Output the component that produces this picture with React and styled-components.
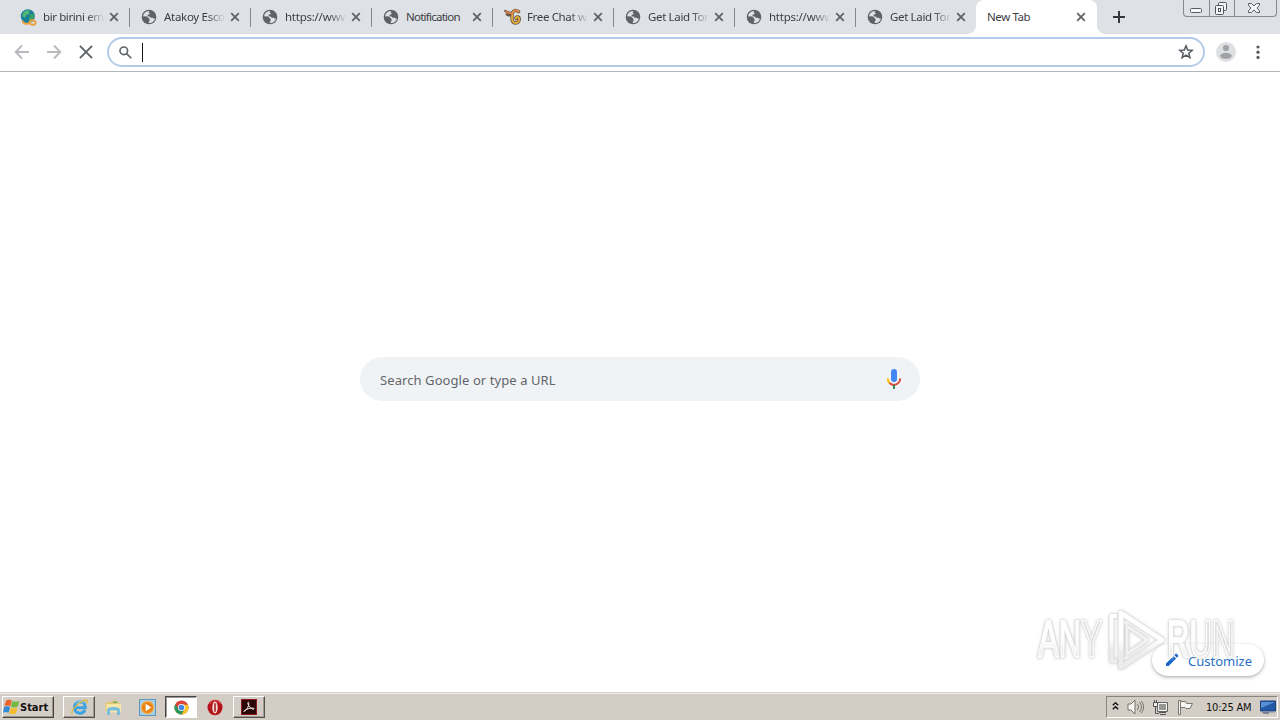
import React from 'react';
import styled, { createGlobalStyle } from 'styled-components';

const GlobalStyle = createGlobalStyle`
    * {
        box-sizing: border-box;
    }
    body {
        margin: 0;
        overflow: hidden;
        background: #fff;
        font-family: "Noto Sans", "Open Sans", sans-serif;
    }
    svg {
        display: block;
        flex-shrink: 0;
    }
`;

const tabs = [
    { title: 'bir birini emen', icon: 'search', spacing: '-0.4px' },
    { title: 'Atakoy Escort', icon: 'globe', spacing: '-0.3px' },
    { title: 'https://www.', icon: 'globe', spacing: '-0.25px' },
    { title: 'Notification', icon: 'globe', spacing: '-0.75px' },
    { title: 'Free Chat with', icon: 'chat', spacing: '-0.35px' },
    { title: 'Get Laid Tonight', icon: 'globe', spacing: '-0.35px' },
    { title: 'https://www.', icon: 'globe', spacing: '-0.25px' },
    { title: 'Get Laid Tonight', icon: 'globe', spacing: '-0.35px' },
];

const GlobeIcon = () => (
    <svg width="16" height="16" viewBox="0 0 16 16">
        <circle cx="8" cy="8" r="7.3" fill="#5f6368" />
        <path d="M8.3 2.1c-1 .8-.6 1.7.3 1.9l-.3 1.4H6.6v1.8l1.9.2 1.2 1.3h2l.7.9h1.6c-.5 2.5-2.7 4.5-5.5 4.5l-.7-.2v-1.3l1-1-.5-1.5H6.9L5.4 8.5 2.2 7.3C2.5 4.3 5 2.1 8.3 2.1Z" fill="#dee1e6" />
        <path d="m3.2 7.2 3 .2 2.2 2.4-1.4 2-1.4-1.4-2.6-.7Z" fill="#5f6368" />
    </svg>
);

const SearchGlobeIcon = () => (
    <svg width="17" height="17" viewBox="0 0 17 17">
        <circle cx="7.8" cy="7.3" r="7" fill="#197f98" />
        <path d="M3.6 2.8 7.5 1l2.3 1.6-.9 2.6-2.7.9-.8 2.7L2 7.3Z" fill="#4fb678" />
        <path d="m10 5.5 3.8-.5.5 3.4-3 3.4-2.6-1.6Z" fill="#38a166" />
        <path d="M2.2 12c2 3.4 4.8 3.6 7.3 1.8m0 0c.8-3.6 5.8-3 6 .1.2 2.5-5.3 2.5-6-.1Z" fill="none" stroke="#eba342" strokeWidth="2" />
    </svg>
);

const ChatIcon = () => (
    <svg width="18" height="18" viewBox="0 0 18 18" fill="none" strokeLinecap="round">
        <path d="M1.5 3c1.5 2.6 4 1.4 6.8 2.5M3 6.5c1.6 1.2 3.3.9 4.8.1" stroke="#6c5645" strokeWidth="2.6" />
        <path d="M14.6 3.6C9.8.2 7.5 5 8.2 8.5c-.6 3.3.3 6.5 3.2 6.5 4 0 5-5.3 2.6-6-1.8-.5-2.5 1.2-1.6 1.8" stroke="#665743" strokeWidth="3.4" />
        <path d="M14.6 3.6C9.8.2 7.5 5 8.2 8.5c-.6 3.3.3 6.5 3.2 6.5 4 0 5-5.3 2.6-6-1.8-.5-2.5 1.2-1.6 1.8" stroke="#e9ad38" strokeWidth="1.8" />
        <path d="M1.7 3.3c1.8 2.4 4 1.2 6.6 2.2m1-2c1.3-1.3 3-1.3 4.8 0" stroke="#e4864d" strokeWidth="1.5" />
    </svg>
);

const favicons = { globe: GlobeIcon, search: SearchGlobeIcon, chat: ChatIcon };

const CloseIcon = ({ size = 10, width = 1.8 }) => (
    <svg width={size} height={size} viewBox="0 0 10 10" fill="none" stroke="#5f6368" strokeWidth={width}>
        <path d="m1.2 1.2 7.6 7.6m0-7.6L1.2 8.8" />
    </svg>
);

const WindowButtons = () => (
    <Controls>
        <ControlButton $width={25}>
            <svg width="13" height="17" viewBox="0 0 13 17">
                <rect x=".5" y="8.5" width="11" height="4" rx="1" fill="#f7f8fa" stroke="#585d65" />
            </svg>
        </ControlButton>
        <ControlButton $width={25}>
            <svg width="14" height="17" viewBox="0 0 14 17" fill="#f3f4f6" stroke="#50555d">
                <rect x="4.5" y="2.5" width="8" height="8" rx="1" />
                <rect x="1.5" y="5.5" width="8" height="9" rx="1" />
                <rect x="4.5" y="8.5" width="2" height="3" />
            </svg>
        </ControlButton>
        <ControlButton $width={42}>
            <svg width="13" height="17" viewBox="0 0 13 17" fill="#f7f8fa" stroke="#585d65">
                <path d="M.5 3.5h3L6 6l2.5-2.5h3v1.8L9 8l2.5 2.8v1.7h-3L6 9.9l-2.5 2.6h-3v-1.7L3 8 .5 5.3Z" />
            </svg>
        </ControlButton>
    </Controls>
);

const TabStrip = () => (
    <Strip>
        {tabs.map(({ title, icon, spacing }, i) => {
            const Icon = favicons[icon];
            return (
                <Tab key={i} $divider={i < tabs.length - 1}>
                    <Favicon><Icon /></Favicon>
                    <TabTitle $spacing={spacing} $fade={title !== 'Notification'}>{title}</TabTitle>
                    <CloseIcon />
                </Tab>
            );
        })}
        <ActiveTab>
            <TabTitle $spacing="-0.4px" $wide>New Tab</TabTitle>
            <CloseIcon />
        </ActiveTab>
        <NewTab>
            <svg width="12" height="12" viewBox="0 0 12 12" stroke="#34373d" strokeWidth="2">
                <path d="M6 0v12M0 6h12" />
            </svg>
        </NewTab>
        <WindowButtons />
    </Strip>
);

const Toolbar = () => (
    <Bar>
        <NavButton>
            <svg width="16" height="16" viewBox="0 0 16 16" fill="none" stroke="#b8babd" strokeWidth="1.9">
                <path d="M15 8H2m6-6.5L1.7 8 8 14.5" />
            </svg>
        </NavButton>
        <NavButton>
            <svg width="16" height="16" viewBox="0 0 16 16" fill="none" stroke="#b8babd" strokeWidth="1.9">
                <path d="M1 8h13M8 1.5 14.3 8 8 14.5" />
            </svg>
        </NavButton>
        <NavButton><CloseIcon size={16} width={1.2} /></NavButton>
        <Omnibox>
            <svg width="13" height="13" viewBox="0 0 13 13" fill="none" stroke="#5f6368" strokeWidth="1.6">
                <circle cx="4.8" cy="4.8" r="3.8" />
                <path d="m7.6 7.6 4.7 4.7" />
            </svg>
            <Caret />
            <svg width="16" height="16" viewBox="0 0 16 16" fill="none" stroke="#55595f" strokeWidth="1.5">
                <path d="m8 1.8 1.7 4.2 4.6.3-3.5 2.9 1.1 4.4L8 11.2l-3.9 2.4 1.1-4.4-3.5-2.9L6.3 6Z" />
            </svg>
        </Omnibox>
        <Avatar>
            <svg width="20" height="20" viewBox="0 0 20 20">
                <circle cx="10" cy="10" r="10" fill="#dfe0e2" />
                <circle cx="10" cy="6" r="3.1" fill="#a0a2a5" />
                <ellipse cx="10" cy="13.8" rx="5.8" ry="3" fill="#a0a2a5" />
            </svg>
        </Avatar>
        <svg width="4" height="16" viewBox="0 0 4 16" fill="#55595f">
            <circle cx="2" cy="3" r="1.6" />
            <circle cx="2" cy="8.2" r="1.6" />
            <circle cx="2" cy="13.4" r="1.6" />
        </svg>
    </Bar>
);

const MicIcon = () => (
    <svg width="16" height="22" viewBox="0 0 16 22" fill="none">
        <rect x="5" y="1" width="6" height="13" rx="3" fill="#4285f4" />
        <path d="M1.8 10.5c0 2.1.8 3.7 2 4.7" stroke="#fbbc04" strokeWidth="2" />
        <path d="M3.5 15c2.8 2.5 6.3 2.5 9-.1 1.1-1.1 1.7-2.5 1.7-4.4" stroke="#dc4a40" strokeWidth="2" />
        <path d="M8 17v4" stroke="#348a53" strokeWidth="2" />
    </svg>
);

const Watermark = () => (
    <Mark>
        <MarkText>ANY</MarkText>
        <svg width="62" height="64" viewBox="0 0 62 64" fill="none" strokeLinejoin="round">
            <defs>
                <linearGradient id="mark" x1="0" y1="0" x2="0" y2="1">
                    <stop offset=".5" stopColor="#fff" />
                    <stop offset=".75" stopColor="#e6e6e6" />
                </linearGradient>
            </defs>
            <path d="M13 8H7.500v45H13" stroke="url(#mark)" strokeWidth="4" />
            <path d="M17 5v54l41-27Z" stroke="url(#mark)" strokeWidth="5" />
            <path d="M23 18v28l20-14Z" stroke="#eee" strokeWidth="3" />
        </svg>
        <MarkText>RUN</MarkText>
    </Mark>
);

const NewTabPage = () => (
    <Page>
        <SearchBox>
            <span>Search Google or type a URL</span>
            <MicIcon />
        </SearchBox>
        <Customize>
            <svg width="14" height="14" viewBox="0 0 14 14" fill="#1967c9">
                <path d="m1 10.4 7.5-7.5 2.6 2.6L3.600 13H1ZM9.300 2.100 10.500.9c.4-.4.9-.4 1.300 0l1.300 1.300c.4.4.4.9 0 1.300l-1.200 1.200Z" />
            </svg>
            <span>Customize</span>
        </Customize>
        <Watermark />
    </Page>
);

const WindowsIcon = () => (
    <svg width="17" height="16" viewBox="0 0 17 16">
        <path d="M3 1.500c2-1.200 3.900-1 5.800.1L7.400 7.300C5.500 6.200 3.500 6 1.500 7.200Z" fill="#e7652d" />
        <path d="M9.400 2c2.200 1 4.700.9 7.100-.3l-1.700 5.900c-2.200 1.100-4.700 1.100-6.900.2Z" fill="#73b943" />
        <path d="M1.200 8c2-1.200 4-1 5.900.1l-1.500 5.700C3.700 12.700 1.700 12.600 0 13.800Z" fill="#328bd2" />
        <path d="M7.700 8.700c2.300.9 4.600.9 6.900-.3L13 14.200c-2.200 1.200-4.600 1.100-6.800.2Z" fill="#f3bd2e" />
    </svg>
);

const ExplorerIcon = () => (
    <svg width="19" height="18" viewBox="0 0 19 18" fill="none">
        <path d="M15 12c-2.500 5-10.300 3.800-10.500-2.300C4.700 2.800 14 2 15.200 8.200v1.500H6" stroke="#3ca2e0" strokeWidth="3" />
        <path d="M6.300 5.700c2-2.600 5.100-2.700 7-.2" stroke="#a2e1fb" />
        <path d="M2.400 16c-3-2 4.500-10.600 11.500-13.700 4-1.600 4 .8 2.200 3.600" stroke="#d9b84b" strokeWidth="1.300" />
    </svg>
);

const FolderIcon = () => (
    <svg width="18" height="17" viewBox="0 0 18 17">
        <path d="M1.500 3h6l1-1.500h5V4H16v9H1.500Z" fill="#e3c873" />
        <path d="M2.500 5H17v8.500H2.500Z" fill="#f5e7a6" />
        <path d="M9 2.500h4V4H9Z" fill="#6daf6f" />
        <path d="M3 16v-4.500c0-2.500 2-3.500 6.500-3.500s6.500 1 6.500 3.500V16h-3v-4.500H6V16Z" fill="#78bde0" />
    </svg>
);

const PlayerIcon = () => (
    <svg width="17" height="17" viewBox="0 0 17 17">
        <rect x=".5" y=".5" width="16" height="16" fill="#a7cce5" stroke="#5f98bd" />
        <circle cx="8.500" cy="8.500" r="6.300" fill="#ed8617" stroke="#f7bd64" />
        <path d="m6.700 4.800 5.500 3.700-5.500 3.700Z" fill="#fff" />
    </svg>
);

const ChromeIcon = () => (
    <svg width="15" height="15" viewBox="0 0 16 16">
        <circle cx="8" cy="8" r="7.500" fill="#dc4437" />
        <path d="M1.400 4.400A7.500 7.500 0 0 0 8 15.500L11 10H5Z" fill="#26995b" />
        <path d="M8 15.500A7.500 7.500 0 0 0 14.800 5H8l3.200 5Z" fill="#f5c52c" />
        <circle cx="8" cy="8" r="3.700" fill="#fff" />
        <circle cx="8" cy="8" r="2.900" fill="#4285e8" />
    </svg>
);

const OperaIcon = () => (
    <svg width="16" height="17" viewBox="0 0 16 17">
        <ellipse cx="8" cy="8.500" rx="7.500" ry="7.800" fill="#b3141a" />
        <path d="M2.500 5c2-4 8-4.500 11-.5" stroke="#d9484a" strokeWidth="1.200" fill="none" />
        <ellipse cx="8" cy="8.500" rx="2.700" ry="6" fill="#f2dcda" />
        <rect x="7" y="4" width="2" height="9" rx="1" fill="#b5474a" />
    </svg>
);

const AcrobatIcon = () => (
    <svg width="16" height="16" viewBox="0 0 16 16">
        <path d="M0 0h16v16H0Z" fill="#8b1a1c" />
        <path d="M1 1h14v14H1Z" fill="#2c0708" />
        <path d="M3 12.500c3-1.600 5-5.300 4.800-8.300-.1-1.800-1.500-.8-.8.8 1 2.600 3 4.700 5.500 5.300 1.300 0 .8-1.200-.6-1.200-2.800-.2-5.600.8-8 2.200-1.100.8-1.200 1.400-.9 1.200Z" fill="none" stroke="#eee" />
    </svg>
);

const launchers = [
    { icon: ExplorerIcon, frame: 'raised' },
    { icon: FolderIcon },
    { icon: PlayerIcon },
    { icon: ChromeIcon, frame: 'pressed' },
    { icon: OperaIcon },
    { icon: AcrobatIcon, frame: 'raised' },
];

const SystemTray = () => (
    <Tray>
        <svg width="7" height="10" viewBox="0 0 7 10" fill="none" stroke="#111" strokeWidth="1.400">
            <path d="m.8 3.200 2.700-2.400 2.700 2.400M.8 7.200l2.700-2.400 2.700 2.400" />
        </svg>
        <svg width="17" height="16" viewBox="0 0 17 16" fill="#f7f6f3" stroke="#74726e">
            <path d="M1 5h3l4-4v14l-4-4H1Z" />
            <path d="M10.300 5c1.600 2 1.600 4 0 6m2-8c2.800 3 2.800 7 0 10m2-11c3 4 3 8 0 12" fill="none" />
        </svg>
        <svg width="17" height="17" viewBox="0 0 17 17">
            <path d="M5.500 3.500h10v9h-10Z" fill="#969693" stroke="#666" />
            <path d="M6.500 4.500h8v7h-8Z" fill="none" stroke="#f5f5f2" />
            <path d="M3.500 8v6.500H7m0-1h7m-6 2h6" fill="none" stroke="#555" />
            <path d="M1.500 3.500h4v4h-4ZM2.500 1v2m2-2v2" fill="#eee" stroke="#555" />
        </svg>
        <svg width="17" height="17" viewBox="0 0 17 17" fill="#f7f6f3" stroke="#777570">
            <path d="M1.500 1.500h2v14h-2Z" />
            <path d="M3.500 2.500h5l1 2h6l-2.500 5H9l-1-1H3.500Z" />
        </svg>
        <Clock>10:25 AM</Clock>
        <svg width="16" height="14" viewBox="0 0 16 14">
            <path d="M.5 1h15v10H.5Z" fill="#2459a6" stroke="#193f7d" />
            <path d="M1 2h14L1 8Z" fill="#5990d2" />
            <path d="M1 12h14" stroke="#8596a6" />
            <path d="M3 13h6" stroke="#344962" />
        </svg>
    </Tray>
);

const Taskbar = () => (
    <Task>
        <StartButton>
            <WindowsIcon />
            <span>Start</span>
        </StartButton>
        <Launchers>
            {launchers.map(({ icon: Icon, frame }, i) => (
                <Launcher key={i} $frame={frame}><Icon /></Launcher>
            ))}
        </Launchers>
        <SystemTray />
    </Task>
);

const App = () => (
    <Desktop>
        <GlobalStyle />
        <TabStrip />
        <Toolbar />
        <NewTabPage />
        <Taskbar />
    </Desktop>
);

const Desktop = styled.div`
    width: 1280px;
    height: 720px;
    display: flex;
    flex-direction: column;
    overflow: hidden;
`;

const Strip = styled.div`
    height: 34px;
    flex-shrink: 0;
    display: flex;
    padding-left: 8px;
    background: #dee1e6;
`;

const Tab = styled.div`
    width: 121px;
    height: 34px;
    display: flex;
    align-items: center;
    padding-left: 12px;
    position: relative;
    &::after {
        content: '';
        display: ${({ $divider }) => ($divider ? 'block' : 'none')};
        position: absolute;
        right: -1px;
        top: 8px;
        width: 1px;
        height: 19px;
        background: #84888f;
    }
`;

const Favicon = styled.div`
    width: 23px;
    flex-shrink: 0;
`;

const TabTitle = styled.div`
    width: ${({ $wide }) => ($wide ? '89px' : '60px')};
    margin-right: ${({ $wide }) => ($wide ? '0' : '6px')};
    flex-shrink: 0;
    overflow: hidden;
    white-space: nowrap;
    font-size: 11.5px;
    line-height: 18px;
    letter-spacing: ${({ $spacing }) => $spacing};
    color: #3c4045;
    ${({ $fade }) => $fade && 'mask-image: linear-gradient(to right, #000 72%, transparent 103%);'}
`;

const ActiveTab = styled(Tab)`
    padding-left: 11px;
    background: #fff;
    border-radius: 8px 8px 0 0;
    &::before, &::after {
        content: '';
        display: block;
        position: absolute;
        top: auto;
        bottom: 0;
        width: 8px;
        height: 8px;
    }
    &::before {
        left: -8px;
        background: radial-gradient(circle at 0 0, #dee1e6 7.5px, #fff 8px);
    }
    &::after {
        right: -8px;
        background: radial-gradient(circle at 100% 0, #dee1e6 7.5px, #fff 8px);
    }
`;

const NewTab = styled.div`
    width: 28px;
    display: flex;
    align-items: center;
    justify-content: center;
    margin-left: 8px;
`;

const Controls = styled.div`
    height: 17px;
    margin-left: 50px;
    display: flex;
    border: 1px solid #858990;
    border-top: 0;
    border-radius: 0 0 4px 4px;
    overflow: hidden;
`;

const ControlButton = styled.div`
    width: ${({ $width }) => $width}px;
    display: flex;
    justify-content: center;
    & + & {
        border-left: 1px solid #858990;
        padding-right: 2px;
    }
`;

const Bar = styled.div`
    height: 38px;
    flex-shrink: 0;
    display: flex;
    align-items: center;
    padding: 0 0 1px 6px;
    background: #fff;
    border-bottom: 1px solid #b3b6b9;
`;

const NavButton = styled.div`
    width: 32px;
    display: flex;
    justify-content: center;
`;

const Omnibox = styled.div`
    width: 1098px;
    height: 30px;
    margin-left: 5px;
    padding: 0 9px 0 10px;
    display: flex;
    align-items: center;
    border: 2px solid #b4cbe9;
    border-radius: 15px;
`;

const Caret = styled.div`
    width: 1px;
    height: 19px;
    margin: 0 auto 0 10px;
    background: #111;
`;

const Avatar = styled.div`
    margin: 0 20px 0 11px;
`;

const Page = styled.div`
    flex: 1;
    position: relative;
    display: flex;
    justify-content: center;
    padding-top: 285px;
    background: #fff;
`;

const SearchBox = styled.div`
    width: 560px;
    height: 44px;
    padding: 0 18px 0 20px;
    display: flex;
    align-items: center;
    justify-content: space-between;
    border-radius: 22px;
    background: #f0f3f5;
    color: #62666b;
    font-size: 13px;
    letter-spacing: 0.08px;
    span {
        padding-top: 1px;
    }
`;

const Customize = styled.div`
    position: absolute;
    right: 16px;
    bottom: 16px;
    width: 112px;
    height: 32px;
    padding-left: 13px;
    display: flex;
    align-items: center;
    gap: 9px;
    border-radius: 16px;
    background: #fff;
    box-shadow: 0 1px 3px rgba(60, 64, 67, .35), 0 2px 4px rgba(60, 64, 67, .12);
    color: #2770c9;
    font-size: 13px;
    letter-spacing: 0;
    span {
        padding-top: 1px;
    }
`;

const Mark = styled.div`
    position: absolute;
    left: 1038px;
    top: 536px;
    display: flex;
    align-items: center;
    opacity: .75;
    filter: drop-shadow(0 0 1px #bbb) drop-shadow(0 0 1.5px #ccc);
`;

const MarkText = styled.div`
    width: 66px;
    color: transparent;
    background: linear-gradient(#fff 50%, #eaeaea 68%) text;
    font: 51px/56px "Liberation Sans", sans-serif;
    -webkit-text-stroke: 1.5px #fff;
    transform: scaleX(.61);
    transform-origin: left;
    & + svg + & {
        margin-left: 1px;
    }
`;

const Task = styled.div`
    height: 28px;
    flex-shrink: 0;
    display: flex;
    align-items: center;
    padding: 1px 2px 0;
    background: #d4cdc5;
    border-top: 1px solid #d4d0c8;
    box-shadow: inset 0 1px #f2f0ed;
`;

const StartButton = styled.div`
    width: 52px;
    height: 22px;
    display: flex;
    align-items: center;
    border: 1px solid;
    border-color: #fff #45423f #45423f #fff;
    box-shadow: inset -1px -1px #99938c;
    color: #111;
    font: bold 11px "DejaVu Sans Condensed", "DejaVu Sans", sans-serif;
    letter-spacing: 0;
`;

const Launchers = styled.div`
    display: flex;
    margin-left: 9px;
    gap: 2px;
`;

const frames = {
    raised: `
        border-color: #fff #55504c #55504c #fff;
        box-shadow: inset -1px -1px #9e9993;
    `,
    pressed: `
        background: #fff;
        border-color: #484542 #fff #fff #484542;
        box-shadow: inset 1px 1px #9e9993;
    `,
};

const Launcher = styled.div`
    width: 32px;
    height: 22px;
    display: flex;
    align-items: center;
    justify-content: center;
    border: 1px solid transparent;
    ${({ $frame }) => frames[$frame]}
`;

const Tray = styled.div`
    width: 172px;
    height: 22px;
    margin-left: auto;
    padding: 0 1px 0 5px;
    display: flex;
    align-items: center;
    gap: 8px;
    border: 1px solid;
    border-color: #89847e #fff #fff #89847e;
`;

const Clock = styled.div`
    width: 49px;
    margin-left: 4px;
    color: #111;
    font: 11px "DejaVu Sans Condensed", "DejaVu Sans", sans-serif;
    letter-spacing: -0.2px;
    white-space: nowrap;
`;

export default App;
